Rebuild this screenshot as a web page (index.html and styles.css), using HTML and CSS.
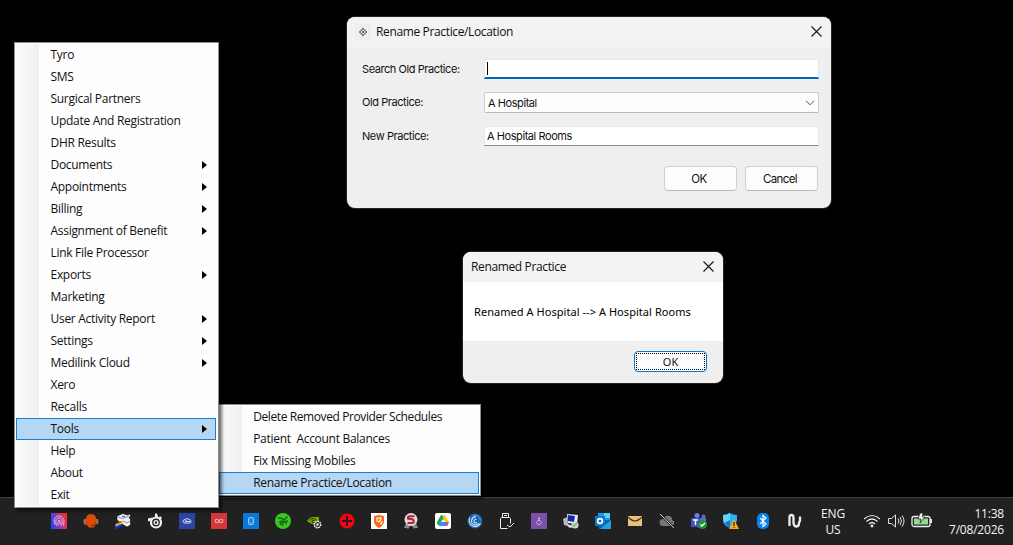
FILE: index.html
```
<!DOCTYPE html>
<html lang="en">
<head>
<meta charset="utf-8">
<title>Rename Practice/Location</title>
<link rel="stylesheet" href="styles.css">
</head>
<body>
<main class="desktop">
  <footer class="taskbar">
    <div class="tray">
      <svg viewBox="0 0 16 16"><defs><linearGradient id="finger" x1="0" x2="1" y1=".6" y2=".3"><stop offset="0" stop-color="#2846ee"/><stop offset=".5" stop-color="#a43aa4"/><stop offset="1" stop-color="#ff2828"/></linearGradient></defs><path fill="url(#finger)" d="M0 0h16v16H0z"/><g fill="none" stroke="#e0c9ee" stroke-width=".9"><path d="M4 11.5C2 7 4 3 8 3s6 4 4.500 8.500L13 13M5.500 12.500C4 8 5 5 8 5s3.500 3 2.800 6M7 12.500V8q1-2 2 0v3l2 1.500"/></g></svg>
      <svg viewBox="0 0 16 16"><path fill="#b8683e" d="M1 6h2v6H2L.5 10V7zm12 0h2l.5 2-.5 3h-2z"/><path fill="#d94d08" d="M8 1c4 0 5.500 3 5 7-.2 3-1 5-2 6.500H6C4 13 2.800 10 3 8c-.5-4 1-7 5-7z"/><path d="M8.500 12.500h3l2-2" fill="none" stroke="#8c3208" stroke-width="1.300"/></svg>
      <svg viewBox="0 0 16 16"><path fill="#f1f1f1" stroke="#0b0b0b" stroke-width=".6" d="M2 3l6-2.500L12 2l3-1 .5 2L14 5l1.500 1v6L12 14 7 11 2 7z"/><path stroke="#777" fill="none" stroke-width=".8" d="M3 4l5 1.500L14 3M8 8l4 2L15 8"/><path stroke="#2633bc" d="M7 3l3 .8"/><path d="M0 11l6-3 2 1-7 3z" fill="#f33"/><path d="M0 12l8-3v1l-7 3z" fill="#ff0"/><path d="M0 13l8-3v1l-7 3z" fill="#18df65"/><path d="M0 14l7-3v2l-6 3H0z" fill="#22f"/></svg>
      <svg viewBox="0 0 16 16"><path d="M5 4.500L1 5.500v3l3-1M8 4V.500h2L11 4M12 4.500l1-1.500 2 2-1 1.500" fill="#f2f2f2"/><circle cx="9" cy="9.500" r="5" fill="#262626" stroke="#f2f2f2" stroke-width="2.200"/><circle cx="9" cy="9.500" r="1.900" fill="none" stroke="#f2f2f2" stroke-width="1.400"/></svg>
      <svg viewBox="0 0 16 16"><path fill="#2b45a7" d="M0 0h16v16H0z"/><g fill="none" stroke="#d2d9ed"><path d="M4 8.500Q4 6.500 6 6.500q2-2 4 0 2 0 2 2T10 10H6q-2 0-2-1.500"/><circle cx="7" cy="8.300" r=".8"/><path d="M8 8.500h3"/></g></svg>
      <svg viewBox="0 0 16 16"><path fill="#d3383d" d="M0 0h16v16H0z"/><g fill="none" stroke="#f3aaa8" stroke-width="1.100"><circle cx="5.800" cy="8" r="1.700"/><circle cx="10.200" cy="8" r="1.700"/></g></svg>
      <svg viewBox="0 0 16 16"><path fill="#0879db" d="M0 0h16v16H0z"/><rect x="5.500" y="4.500" width="5" height="7" rx="1" fill="#3c9be9" stroke="#8dc7f4"/><path fill="#0879db" d="M7 6h2v3H7z"/></svg>
      <svg viewBox="0 0 16 16"><circle cx="8" cy="8" r="8" fill="#39c725"/><g fill="none" stroke="#176b13" stroke-width="1.400"><path d="M3 5l4 .5L9 7l3.500-3.500M4 9.500L7 8l2 1 4-1M8 8.500L7.500 13M5 12l2-3M10 9l2 2"/></g></svg>
      <svg viewBox="0 0 16 16"><path fill="#75a900" d="M0 8q3-4 6-4h6v6H9l-4 1Q2 10 0 8z"/><path d="M2.500 7.500q4-4 7 0-2 3-4 2-1-1 0-2h2" fill="none" stroke="#263909"/><circle cx="10.500" cy="11.500" r="3.200" fill="#292929" stroke="#eee" stroke-width="1.500" stroke-dasharray="1.800 .6"/><circle cx="10.500" cy="11.500" r="1.200" fill="#eee"/></svg>
      <svg viewBox="0 0 16 16"><circle cx="8" cy="8" r="7.500" fill="#f80308"/><path stroke="#34103d" stroke-width="2" d="M3 8h10M8 3v10"/></svg>
      <svg viewBox="0 0 16 16"><path fill="#fff" d="M0 0h16v16H0z"/><path fill="#ff6818" d="M3 3l5-1 5 1v6q-1 4-5 6-4-2-5-6z"/><path d="M6 9V5h4q-1 4-3 4m2 2q2 0 2-3" fill="none" stroke="#fff" stroke-width="1.200"/></svg>
      <svg viewBox="0 0 16 16"><path fill="#8b8b8b" d="M3 10l-2 5h3l1 1 2-3h2l2 3 1-1h3l-2-5z"/><circle cx="8" cy="6.500" r="6.500" fill="#ddd"/><path d="M11.500 3.200H7Q4.500 3.200 5 5.500l5 1q2 3-1 3.500H4.500" fill="none" stroke="#bd2030" stroke-width="2.100"/></svg>
      <svg viewBox="0 0 16 16"><rect width="16" height="16" rx="2" fill="#fff"/><path fill="#1da75b" d="M6 2h2l2 3-5 8-3-2v-2z"/><path fill="#ffca23" d="M7 2h3l4 7h-4z"/><path fill="#4788f4" d="M5 9h9l-2 4H4z"/><path fill="#fff" d="M8 6l2 3H6z"/><path fill="#ee5140" d="M11 9h3l-2 4z"/></svg>
      <svg viewBox="0 0 16 16"><circle cx="8" cy="8" r="7.500" fill="#1b62ae"/><g fill="none" stroke="#c5ddf2" stroke-width="1.200"><path d="M3 4.500a6 6 0 1 0 10.500 6M9 4a4 4 0 1 0 3 6M9.500 6.500a1.800 1.800 0 1 0 .5 3"/></g><path d="M6 2.500q6-1 7.500 5" fill="none" stroke="#58a6df"/></svg>
      <svg viewBox="0 0 16 16" fill="none" stroke="#eee"><path d="M3.500 4V.500h6V4M5 2.500h3M1.500 15.500V5.500l1-1h8l1 1v5M1.500 15.500h7M8 12l3 2 4-4"/></svg>
      <svg viewBox="0 0 16 16"><path fill="#7b50a8" d="M0 0h16v16H0z"/><path d="M8 4v3.500M7 5.500h2M7 7.500h2M7 7.500q-3 2 0 4h2q3-2 0-4" fill="none" stroke="#cfb3e6" stroke-width=".9"/></svg>
      <svg viewBox="0 0 16 16"><path d="M0 6l4-2 1 7 5 2-3 1-6-2z" fill="#bbb"/><path fill="#eee" d="M4 1l11 1-1 9-9-1z"/><path fill="#1528b5" d="M5 2l7 1-1 6-6-1z"/><path d="M6 12l5 1-3 2-3-1z" fill="#ddd"/><circle cx="12" cy="12" r="3.500" fill="#cadbc9"/><path d="M10 12l1 1 3-3" fill="none" stroke="#65a66c" stroke-width="1.300"/></svg>
      <svg viewBox="0 0 16 16"><path fill="#199be5" d="M3 0h12v8H3z"/><path fill="#55d1fb" d="M9 0h6v5H9z"/><path fill="#0863b1" d="M3 7h13v9H4z"/><path fill="#279fe3" d="M16 7v9H5z"/><path fill="#0878cc" d="M0 3h10v10H0z"/><circle cx="5" cy="8" r="2.400" fill="none" stroke="#fff" stroke-width="1.600"/></svg>
      <svg viewBox="0 0 16 16"><path fill="#e9c07d" d="M1 3h14v10H1z"/><path d="M1 4q4 4 7 4t7-4" fill="none" stroke="#433620" stroke-width="1.200"/></svg>
      <svg viewBox="0 0 16 16"><path fill="#777" d="M4 13a3.500 3.500 0 0 1 0-7q2-4 6-3 3 0 3 4 3 1 2 4-1 2-3 2z"/><path stroke="#242424" stroke-width="2.400" d="M1 1l14 14"/><path stroke="#ccc" d="M1 1l14 14"/></svg>
      <svg viewBox="0 0 16 16"><circle cx="6" cy="2.500" r="2.500" fill="#757ae6"/><circle cx="12.500" cy="3.500" r="2" fill="#6068d1"/><path fill="#6269cb" d="M4 5h11v6q-1 4-5 4-5 0-6-4z"/><path fill="#4750c3" d="M0 5h9v9H0z"/><path d="M2 7h5M4.500 7v5" stroke="#fff" stroke-width="1.400"/><circle cx="11.500" cy="11.500" r="4.500" fill="#17983b"/><path d="M9.500 11.500l1.500 1.500 3-3" fill="none" stroke="#fff" stroke-width="1.400"/></svg>
      <svg viewBox="0 0 16 16"><path fill="#29b5f3" d="M0 2q4 0 7-2 3 2 7 2v5q-1 5-7 8Q0 12 0 7z"/><path fill="#66d5fc" d="M0 2q4 0 7-2v8L1 11z"/><path fill="#1477cd" d="M1 10l6-3v8z"/><path fill="#f4ae12" d="M11 6l5 10H6z"/><path stroke="#483000" stroke-width="1.300" d="M11 9v4m0 1v1"/></svg>
      <svg viewBox="0 0 16 16"><rect x="2" width="12" height="16" rx="5" fill="#0881ef"/><path d="M5 5l6 6-3 2.500v-11L11 5l-6 6" fill="none" stroke="#fff" stroke-width="1.200"/></svg>
      <svg viewBox="0 0 16 16"><path d="M2.500 13V4q0-2 2-2t2 3v5q.5 3.500 3 3.500T12 10l1-2.500V3.500" fill="none" stroke="#eee" stroke-width="2.300"/></svg>
    </div>
    <div class="lang"><span>ENG</span><span>US</span></div>
    <div class="status">
      <svg viewBox="0 0 18 16" fill="none" stroke="#eee" stroke-width="1.200"><path d="M1 6q8-7 16 0M3.500 8.500q5.500-5 11 0M6 11q3-3 6 0"/><circle cx="9" cy="13" r=".8" fill="#eee"/></svg>
      <svg viewBox="0 0 18 16" fill="none" stroke="#e3e3e3"><path d="M1.500 5.500h3l4-3.500v12l-4-3.500h-3zM11 5.500q2 2.500 0 5M13 4q3 4 0 8M15 2.500q4 5.500 0 11"/></svg>
      <svg class="battery" viewBox="0 0 22 16"><rect x="1" y="3.500" width="18" height="10" rx="2" fill="#252525" stroke="#eee" stroke-width="1.300"/><path fill="#90da91" d="M3 5.500h14v6H3z"/><path d="M20 6v4" stroke="#eee" stroke-width="2"/><path fill="#eee" stroke="#252525" stroke-width=".8" d="M9 0h3L11.500 4H14L9 10l1-4H7z"/></svg>
    </div>
    <div class="clock"><span>11:38</span><span>7/08/2026</span></div>
  </footer>

  <nav class="menu submenu">
    <div class="item"><span class="tight">Delete Removed Provider Schedules</span></div>
    <div class="item"><span>Patient&nbsp; Account Balances</span></div>
    <div class="item"><span>Fix Missing Mobiles</span></div>
    <div class="item selected"><span>Rename Practice/Location</span></div>
  </nav>
  <nav class="menu mainmenu">
    <div class="item"><span>Tyro</span></div>
    <div class="item"><span>SMS</span></div>
    <div class="item"><span>Surgical Partners</span></div>
    <div class="item"><span>Update And Registration</span></div>
    <div class="item"><span>DHR Results</span></div>
    <div class="item more"><span>Documents</span></div>
    <div class="item more"><span>Appointments</span></div>
    <div class="item more"><span>Billing</span></div>
    <div class="item more"><span>Assignment of Benefit</span></div>
    <div class="item"><span>Link File Processor</span></div>
    <div class="item more"><span>Exports</span></div>
    <div class="item"><span>Marketing</span></div>
    <div class="item more"><span>User Activity Report</span></div>
    <div class="item more"><span>Settings</span></div>
    <div class="item more"><span>Medilink Cloud</span></div>
    <div class="item"><span>Xero</span></div>
    <div class="item"><span>Recalls</span></div>
    <div class="item more selected"><span>Tools</span></div>
    <div class="item"><span>Help</span></div>
    <div class="item"><span>About</span></div>
    <div class="item"><span>Exit</span></div>
  </nav>

  <section class="window rename">
    <header class="titlebar">
      <svg class="appicon" viewBox="0 0 16 16"><path fill="#eee" d="M0 0h16v16H0z"/><g fill="#b06472"><path d="M7 4h2v2H7zM7 10h2v2H7zM4 7h2v2H4zM10 7h2v2h-2z"/></g><g fill="#4a658c"><path d="M7 7h2v2H7zM5.500 5.500H7V7H5.500zM9 5.500h1.500V7H9zM5.500 9H7v1.500H5.500zM9 9h1.500v1.500H9z"/></g></svg>
      <span>Rename Practice/Location</span>
      <svg class="close" viewBox="0 0 11 11"><path d="M.5.5l10 10m0-10l-10 10"/></svg>
    </header>
    <div class="form">
      <label>Search Old Practice:</label><div class="field focused"><i class="caret"></i></div>
      <label class="raised">Old Practice:</label><div class="field select"><span>A Hospital</span><svg viewBox="0 0 10 6"><path d="M1 .8l4 4 4-4"/></svg></div>
      <label>New Practice:</label><div class="field"><span>A Hospital Rooms</span></div>
    </div>
    <div class="actions"><button>OK</button><button>Cancel</button></div>
  </section>

  <section class="window message">
    <header class="titlebar">
      <span>Renamed Practice</span>
      <svg class="close" viewBox="0 0 11 11"><path d="M.5.5l10 10m0-10l-10 10"/></svg>
    </header>
    <p class="body">Renamed A Hospital --&gt; A Hospital Rooms</p>
    <div class="foot"><button class="default"><span>OK</span></button></div>
  </section>
</main>
</body>
</html>
```
FILE: styles.css
```
* { box-sizing: border-box; }
body { margin: 0; background: #000; }
svg { display: block; flex: none; }

.desktop {
  position: relative;
  width: 1013px;
  height: 545px;
  overflow: hidden;
  background: #000;
  font: 12px/16px "Open Sans", "Noto Sans", sans-serif;
  color: #111;
}

.taskbar {
  position: absolute;
  left: 0;
  right: 0;
  bottom: 0;
  height: 48px;
  display: flex;
  align-items: center;
  padding-left: 51px;
  background: #212121;
  border-top: 1px solid #414141;
  color: #f4f4f4;
}
.tray { display: flex; gap: 16px; padding-bottom: 1px; }
.tray svg { width: 16px; height: 16px; }
.lang, .clock { display: flex; flex-direction: column; line-height: 16px; letter-spacing: -.2px; }
.lang { width: 30px; margin-left: 15px; align-items: center; }
.status { display: flex; gap: 6px; margin-left: 15px; padding-bottom: 1px; }
.status svg { width: 18px; height: 16px; }
.status .battery { width: 22px; }
.clock { flex: 1; align-items: flex-end; padding-right: 9px; }

.menu {
  position: absolute;
  padding: 1px;
  background: #fdfdfd;
  border: 1px solid #8b8b8b;
  box-shadow: 3px 3px 3px rgba(0, 0, 0, .55);
}
.mainmenu { left: 14px; top: 42px; width: 205px; height: 466px; padding-right: 2px; }
.submenu { left: 217px; top: 404px; width: 264px; height: 92px; }
.item {
  height: 22px;
  display: flex;
  align-items: center;
  justify-content: space-between;
  padding: 0 9px 0 34.5px;
  letter-spacing: -.29px;
  white-space: nowrap;
  background: linear-gradient(90deg, #fbfbfb, #f0f0f0) 0 0 / 23px 100% no-repeat;
}
.submenu .item { padding-left: 34.2px; }
.tight { letter-spacing: -.4px; }
.more::after {
  content: "";
  border: 4px solid transparent;
  border-left: 5px solid #000;
  border-right: 0;
}
.item.selected {
  background: #b5d7f3;
  border: 1px solid #1580d8;
  padding-right: 8px;
  padding-left: 33.5px;
}
.submenu .item.selected { padding-left: 33.2px; }

.window {
  position: absolute;
  overflow: hidden;
  border-radius: 8px;
  background: #efefef;
  box-shadow: 0 0 0 1px #252525;
}
.rename { left: 347px; top: 17px; width: 484px; height: 191px; }
.message { left: 463px; top: 252px; width: 260px; height: 131px; }
.titlebar {
  height: 30px;
  display: flex;
  align-items: center;
  padding: 0 9.5px 1px 8px;
  background: #f3f3f3;
  letter-spacing: -.36px;
}
.appicon { width: 16px; height: 16px; margin-right: 5px; }
.close {
  width: 11px;
  height: 11px;
  margin-left: auto;
  fill: none;
  stroke: #1b1b1b;
  stroke-width: 1.2;
}
.form {
  display: grid;
  grid-template-columns: 122px 335px;
  grid-template-rows: 20px 21px 20px;
  row-gap: 13px;
  padding: 12px 12px 0 15px;
  align-items: center;
  font-family: Inter, "Open Sans", sans-serif;
  font-size: 11px;
  letter-spacing: -.43px;
}
.raised { padding-bottom: 2px; }
.field {
  height: 100%;
  display: flex;
  align-items: center;
  padding: 0 2px;
  background: #fff;
  border: 1px solid #e7e7e7;
  border-bottom-color: #888;
}
.focused { border-bottom: 2px solid #0067b8; }
.caret { width: 1px; height: 13px; background: #000; }
.select {
  justify-content: space-between;
  padding: 0 3px;
  border-color: #ccc;
  border-bottom-color: #bbb;
  border-radius: 2px;
  background: #fdfdfd;
}
.select svg { width: 10px; height: 6px; fill: none; stroke: #555; }
.actions {
  display: flex;
  justify-content: flex-end;
  gap: 8px;
  padding: 20px 13px 0;
}
button {
  width: 73px;
  height: 25px;
  padding: 1px 3px 0 0;
  border: 1px solid #d0d0d0;
  border-bottom-color: #b9b9b9;
  border-radius: 4px;
  background: #fdfdfd;
  color: #111;
  font: 11.5px/15px Inter, sans-serif;
  letter-spacing: -.6px;
}
.body {
  height: 59px;
  margin: 0;
  padding-left: 11px;
  background: #fff;
  color: #000;
  font: 11px/60px "Noto Sans", sans-serif;
  letter-spacing: .05px;
  white-space: pre;
}
.foot { display: flex; justify-content: flex-end; padding: 10px 16px; }
.foot .default {
  height: 21px;
  padding: 1px;
  border-color: #0878cb;
  font: 11px/15px "Noto Sans", sans-serif;
  letter-spacing: 0;
}
.default span { display: block; border: 1px dotted #000; height: 17px; line-height: 16px; }
```
